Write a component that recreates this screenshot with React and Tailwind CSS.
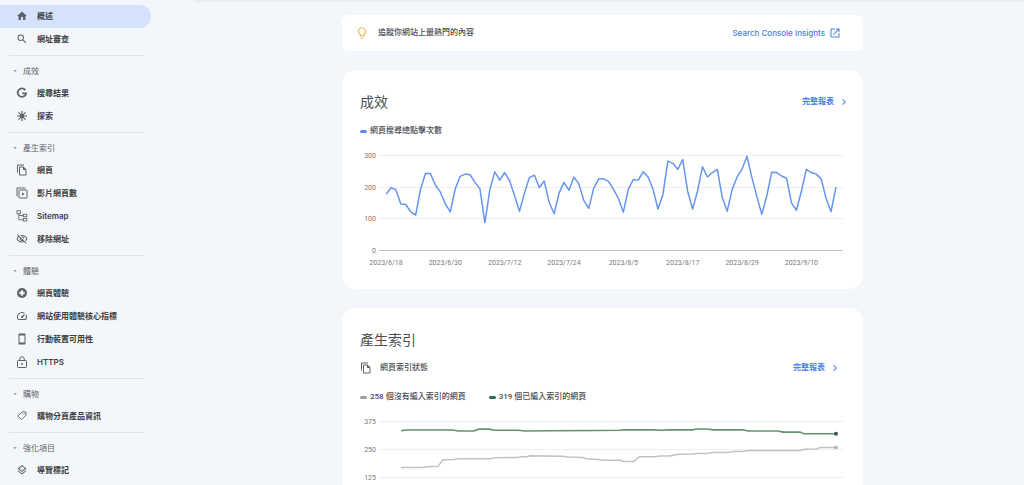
import {
  MdHome, MdSearch, MdOutlineFileCopy, MdOutlineVisibilityOff, MdOutlineSpeed,
  MdOutlineSmartphone, MdOutlineLayers, MdLightbulbOutline, MdOpenInNew,
  MdChevronRight, MdArrowDropDown,
} from 'react-icons/md'
import clsx from 'clsx'

const GoogleIcon = ({ className }) => (
  <svg viewBox="0 0 24 24" className={className} fill="none" stroke="currentColor" strokeWidth="3.6">
    <path d="M18.6 6.2A8.4 8.4 0 1 0 20.2 12.6H12.4" />
  </svg>
)

const DiscoverIcon = ({ className }) => (
  <svg viewBox="0 0 24 24" className={className} fill="none" stroke="currentColor" strokeWidth="2.4">
    <path d="M12 2v20M2 12h20M4.9 4.9l14.2 14.2M19.1 4.9L4.9 19.1" />
    <circle cx="12" cy="12" r="2.6" fill="currentColor" />
  </svg>
)

const VideoPagesIcon = ({ className }) => (
  <svg viewBox="0 0 24 24" className={className} fill="none" stroke="currentColor" strokeWidth="2">
    <path d="M2 19V2h17" />
    <rect x="6" y="6" width="16" height="16" rx="1" />
    <path d="M12 10.5v7l5-3.5z" fill="currentColor" stroke="none" />
  </svg>
)

const SitemapIcon = ({ className }) => (
  <svg viewBox="0 0 24 24" className={className} fill="none" stroke="currentColor" strokeWidth="1.7">
    <rect x="2" y="1.500" width="7" height="6" />
    <rect x="14.500" y="8.500" width="7" height="5" />
    <rect x="14.500" y="17" width="7" height="5" />
    <path d="M5.5 7.500v12h9M5.5 11h9" />
  </svg>
)

const PageExperienceIcon = ({ className }) => (
  <svg viewBox="0 0 24 24" className={className}>
    <circle cx="12" cy="12" r="10" fill="currentColor" />
    <path d="M12 6l2.200 3.800L18 12l-3.800 2.200L12 18l-2.200-3.800L6 12l3.800-2.200z" fill="#fff" stroke="#fff" />
  </svg>
)

const LockIcon = ({ className }) => (
  <svg viewBox="0 0 24 24" className={className} fill="none" stroke="currentColor" strokeWidth="2">
    <rect x="3" y="9" width="18" height="14" rx="1.500" />
    <path d="M7.500 9V6a4.500 4.500 0 0 1 9 0v3" />
    <circle cx="12" cy="16" r="2" fill="currentColor" stroke="none" />
  </svg>
)

const TagIcon = ({ className }) => (
  <svg viewBox="-2 -1 28 28" className={className} fill="none" stroke="currentColor" strokeWidth="2.2" strokeLinejoin="round">
    <path d="M12.5 3.5L20 3a1.500 1.500 0 0 1 1.500 1.500L21 11.500 12 20.500a1.500 1.500 0 0 1-2.100 0L3 14.200a1.500 1.500 0 0 1 0-2.100z" />
    <circle cx="17" cy="7.500" r="1.400" fill="currentColor" stroke="none" />
  </svg>
)

const topItems = [
  { label: '概述', icon: MdHome, active: true },
  { label: '網址審查', icon: MdSearch },
]

const groups = [
  {
    title: '成效',
    items: [
      { label: '搜尋結果', icon: GoogleIcon },
      { label: '探索', icon: DiscoverIcon },
    ],
  },
  {
    title: '產生索引',
    items: [
      { label: '網頁', icon: MdOutlineFileCopy },
      { label: '影片網頁數', icon: VideoPagesIcon },
      { label: 'Sitemap', icon: SitemapIcon },
      { label: '移除網址', icon: MdOutlineVisibilityOff },
    ],
  },
  {
    title: '體驗',
    items: [
      { label: '網頁體驗', icon: PageExperienceIcon },
      { label: '網站使用體驗核心指標', icon: MdOutlineSpeed },
      { label: '行動裝置可用性', icon: MdOutlineSmartphone },
      { label: 'HTTPS', icon: LockIcon },
    ],
  },
  { title: '購物', items: [{ label: '購物分頁產品資訊', icon: TagIcon }] },
  { title: '強化項目', items: [{ label: '導覽標記', icon: MdOutlineLayers }] },
]

// daily clicks, 2023/6/18 - 2023/9/17
const clicks = [
  177, 198, 192, 147, 145, 122, 112, 194, 244, 242, 206, 184, 147, 122, 194, 234, 241, 239, 215, 194,
  88, 192, 248, 222, 246, 220, 173, 124, 181, 230, 238, 199, 219, 152, 116, 181, 215, 190, 231, 211,
  158, 133, 196, 226, 226, 218, 193, 164, 121, 193, 224, 222, 248, 232, 193, 131, 177, 282, 275, 256,
  287, 187, 131, 187, 264, 232, 246, 256, 167, 124, 192, 232, 257, 297, 230, 170, 114, 172, 247, 246,
  235, 228, 150, 127, 187, 256, 246, 241, 226, 164, 123, 200,
]
const clickDates = ['2023/6/18', '2023/6/30', '2023/7/12', '2023/7/24', '2023/8/5', '2023/8/17', '2023/8/29', '2023/9/10']

// [x, page count]
const indexed = [
  [41, 332], [47, 335], [93, 335], [98, 331], [114, 331], [119, 339], [129, 339], [135, 334], [158, 334],
  [165, 331], [190, 332], [237, 333], [260, 334], [264, 336], [293, 336], [301, 334], [312, 336], [332, 336],
  [337, 340], [347, 340], [353, 336], [383, 336], [388, 331], [418, 331], [423, 326], [440, 326], [444, 319], [476, 319],
]
const notIndexed = [
  [41, 170], [63, 170], [67, 173], [78, 175], [83, 204], [93, 205], [98, 208], [130, 208], [135, 213],
  [157, 214], [162, 217], [167, 217], [170, 222], [202, 220], [208, 216], [223, 214], [227, 207], [238, 205],
  [242, 202], [260, 202], [264, 196], [274, 196], [279, 217], [295, 217], [300, 221], [310, 221], [316, 227],
  [332, 229], [337, 232], [347, 232], [352, 236], [368, 236], [373, 240], [383, 240], [388, 245], [440, 245],
  [445, 250], [457, 252], [460, 258], [476, 258],
]

function NavItem({ label, icon: Icon, active }) {
  return (
    <a
      href="#"
      className={clsx(
        'flex h-[23px] w-[151px] items-center gap-[9px] rounded-r-full pb-px pl-4 text-[8px] font-semibold text-[#3c4043]',
        active && 'bg-[#d5e2fb]'
      )}
    >
      <Icon className="h-3 w-3 shrink-0 text-[#5f6368]" />
      {label}
    </a>
  )
}

function Sidebar() {
  return (
    <nav className="w-[194px] shrink-0 overflow-y-auto pt-[5px] [scrollbar-width:none]">
      {topItems.map((item) => <NavItem key={item.label} {...item} />)}
      {groups.map((group) => (
        <div key={group.title}>
          <div className="mt-1 mb-[3px] ml-[9px] h-px w-[135px] bg-[#dfe3e8]" />
          <button className="flex h-[23px] items-center gap-1 pl-[11px] text-[8px] text-[#5f6368]">
            <MdArrowDropDown className="h-2 w-2 text-[#80868b]" />
            {group.title}
          </button>
          {group.items.map((item) => <NavItem key={item.label} {...item} />)}
        </div>
      ))}
    </nav>
  )
}

function ReportLink() {
  return (
    <a href="#" className="flex items-center gap-1 text-[8px] leading-3 font-semibold text-[#4a7fe6]">
      完整報表
      <MdChevronRight className="h-3 w-3" />
    </a>
  )
}

function Legend({ color, children }) {
  return (
    <div className="flex items-center gap-[3px] text-[8px] leading-3 font-medium text-[#4a4e52]">
      <span className={clsx('h-[3px] w-[7px] rounded-full', color)} />
      {children}
    </div>
  )
}

function Grid({ ticks, scale }) {
  return ticks.map((t) => (
    <g key={t}>
      <text x="16" y={scale(t) + 2.5} textAnchor="end" className="fill-[#757a80] text-[7px]">{t}</text>
      <line x1="19" x2="483" y1={scale(t)} y2={scale(t)} className={t === 0 ? 'stroke-[#bdc1c6]' : 'stroke-[#eceef0]'} />
    </g>
  ))
}

function ClicksChart() {
  const x = (i) => 26 + (i * 450) / 91
  const y = (v) => 106.5 - v * 0.317
  return (
    <svg viewBox="0 0 483 125" className="mt-[7px] block w-full" role="img" aria-label="網頁搜尋總點擊次數">
      <Grid ticks={[300, 200, 100, 0]} scale={(v) => Math.floor(y(v)) + 0.5} />
      {clickDates.map((d, i) => (
        <text key={d} x={x(i * 12)} y="121" textAnchor="middle" className="fill-[#757a80] text-[7px]">{d}</text>
      ))}
      <polyline
        points={clicks.map((v, i) => `${x(i)},${y(v)}`).join(' ')}
        className="fill-none stroke-[#6794ee]"
        strokeWidth="1.5"
        strokeLinejoin="round"
      />
    </svg>
  )
}

function IndexChart() {
  const y = (v) => 11 + (375 - v) * 0.2267
  const line = (data) => data.map(([px, v]) => `${px},${y(v)}`).join(' ')
  return (
    <svg viewBox="0 0 483 90" className="mt-[7px] block w-full" role="img" aria-label="網頁索引狀態">
      <Grid ticks={[375, 250, 125]} scale={(v) => Math.floor(y(v)) + 0.5} />
      <polyline points={line(notIndexed)} className="fill-none stroke-[#bfc1c3]" strokeWidth="1.5" />
      <polyline points={line(indexed)} className="fill-none stroke-[#63916f]" strokeWidth="1.6" />
      <circle cx="476" cy={y(258)} r="2" className="fill-[#b4b6b8]" />
      <circle cx="476" cy={y(319)} r="2" className="fill-[#3b5546]" />
    </svg>
  )
}

export default function App() {
  return (
    <div className="flex h-screen overflow-hidden bg-[#f3f6fb] font-['Inter','Noto_Sans_CJK_TC',sans-serif]">
      <Sidebar />
      <main className="min-w-0 flex-1 overflow-y-auto border-t-2 border-[#e9edef] pt-[13px] pr-[13px] pb-5 [scrollbar-width:none]">
        <div className="mx-auto flex max-w-[521px] flex-col gap-[19px] font-['Roboto','Noto_Sans_CJK_TC',sans-serif]">
          <section className="flex h-9 items-center gap-[9px] rounded-md bg-white pr-[22px] pl-[13px] text-[8px] font-medium text-[#4a4e52]">
            <MdLightbulbOutline className="h-[14px] w-[14px] text-[#f0b45e]" />
            追蹤你網站上最熱門的內容
            <a href="#" className="ml-auto flex items-center gap-1 font-['Inter',sans-serif] font-medium text-[#4a7fe6]">
              Search Console Insights
              <MdOpenInNew className="h-3 w-3" />
            </a>
          </section>

          <section className="rounded-[14px] bg-white pt-[21px] pr-5 pb-5 pl-[18px]">
            <div className="-mr-[7px] flex items-center justify-between">
              <h2 className="text-sm leading-[22px] text-[#4a4e52]">成效</h2>
              <ReportLink />
            </div>
            <div className="mt-3">
              <Legend color="bg-[#5b8def]">網頁搜尋總點擊次數</Legend>
            </div>
            <ClicksChart />
          </section>

          <section className="rounded-[14px] bg-white pt-[21px] pr-5 pb-5 pl-[18px]">
            <h2 className="text-sm leading-[22px] text-[#4a4e52]">產生索引</h2>
            <div className="mt-[11px] flex items-center justify-between pr-[2px]">
              <h3 className="flex items-center gap-2 text-[8px] leading-3 font-medium text-[#4a4e52]">
                <MdOutlineFileCopy className="h-3 w-3 text-[#5f6368]" />
                網頁索引狀態
              </h3>
              <ReportLink />
            </div>
            <div className="mt-[17px] flex gap-[23px]">
              <Legend color="bg-[#9aa0a0]">258 個沒有編入索引的網頁</Legend>
              <Legend color="bg-[#2f6b48]">319 個已編入索引的網頁</Legend>
            </div>
            <IndexChart />
          </section>
        </div>
      </main>
    </div>
  )
}
